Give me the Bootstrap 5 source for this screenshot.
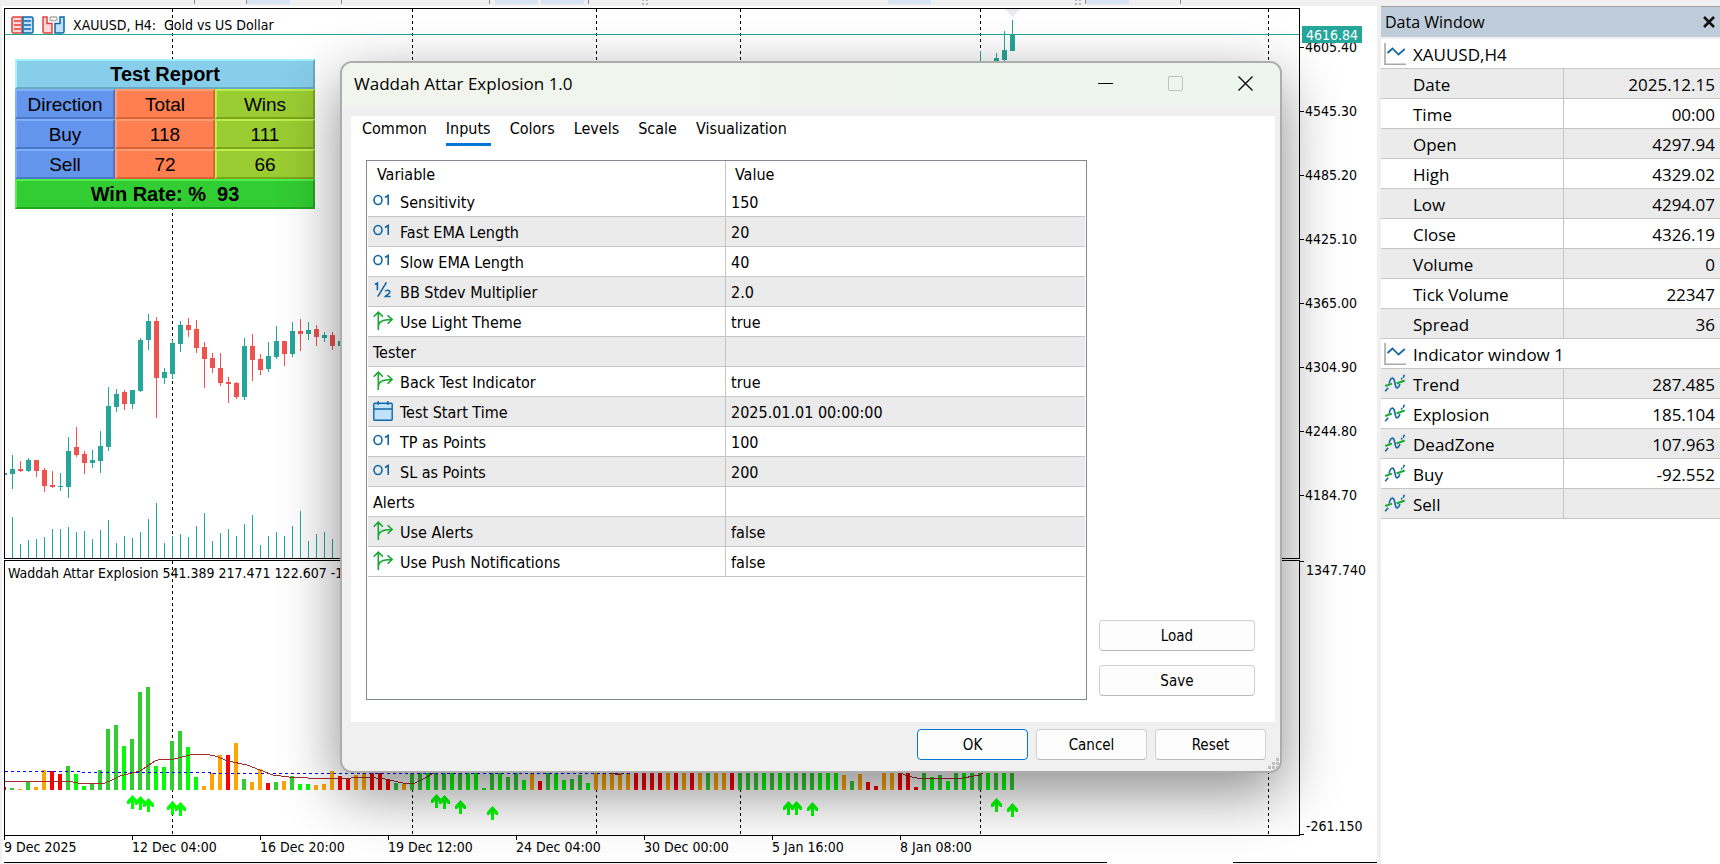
<!DOCTYPE html>
<html lang="en">
<head>
<meta charset="utf-8">
<meta name="viewport" content="width=device-width, initial-scale=1">
<title>XAUUSD, H4 - Waddah Attar Explosion</title>
<link href="https://cdn.jsdelivr.net/npm/bootstrap@5.3.0/dist/css/bootstrap.min.css" rel="stylesheet">
<style>
  :root { --ui: "Open Sans", "Noto Sans", sans-serif; --tahoma: "DejaVu Sans Condensed", "DejaVu Sans", sans-serif; --rule: #c6c6c6; --alt: #ebebeb; }
  body { background: #f0f0f0; color: #000; font-family: var(--ui); font-size: 17px; line-height: 20px; overflow: hidden; }
  .tool-strip { height: 6px; flex: none; }
  .tool-strip svg, .pane svg.plot { display: block; width: 100%; height: 100%; }

  /* chart window */
  .chart-win { background: #fff; margin: 0 4px 0 2px; padding: 2px 0 0 2px; min-width: 0; font-family: var(--tahoma); font-size: 14px; }
  .chart-grid { display: grid; grid-template-columns: minmax(0, 1fr) 77px; grid-template-rows: minmax(0, 1fr) 276px 26px; row-gap: 0; }
  .pane { position: relative; border: 1px solid #000; overflow: hidden; min-height: 0; }
  .pane-main { margin-bottom: 1px; }
  .pane-label { position: absolute; left: 6px; top: 6px; white-space: pre; }
  .pane-sub .pane-label { left: 3px; top: 2px; }
  .axis { position: relative; margin: 0; padding: 29px 0 0; list-style: none; overflow: hidden; }
  .axis li { height: 64px; display: flex; align-items: flex-start; }
  .axis li::before { content: ""; width: 4px; height: 1px; background: #000; margin: 10px 1px 0 0; }
  .axis-sub { padding: 0; display: flex; flex-direction: column; justify-content: space-between; }
  .axis.axis-sub li { height: 20px; }
  .axis-sub li::before { margin: 1px 2px 0 0; }
  .axis-sub li:last-child::before { margin-top: 18px; }
  .axis .price-tag { position: absolute; left: 2px; top: 18px; height: 17px; line-height: 18px; padding: 0 4px; background: #26a69a; color: #fff; }
  .axis .price-tag::before { display: none; }
  .time-axis { display: flex; margin: 0; padding: 0; list-style: none; overflow: hidden; }
  .time-axis li { flex: none; width: 128px; line-height: 23px; position: relative; white-space: nowrap; }
  .time-axis li::before { content: ""; position: absolute; left: 0; top: 0; width: 1px; height: 4px; background: #000; }
  .tab-strip { height: 2px; background: #f0f0f0; border-top: 1px solid #000; }
  .tab-gap { width: 126px; background: #fff; height: 2px; }

  /* report panel */
  .report { position: absolute; left: 10px; top: 50px; width: 300px; table-layout: fixed; border-collapse: separate; border-spacing: 0; font: 19px/22px "Liberation Sans", Arial, sans-serif; text-align: center; }
  .report td, .report th { height: 30px; padding: 3px 0 1px; border: 2px solid; font-weight: 400; line-height: 22px; }
  .report .rp-wide { padding: 2px 0; font-size: 20px; font-weight: 700; white-space: pre; }
  .rp-sky { background: #87ceeb; border-color: #a2f3ff #6caac4 #6caac4 #a2f3ff !important; }
  .rp-blue { background: #6495ed; border-color: #7db0ff #4a77c8 #4a77c8 #7db0ff !important; }
  .rp-coral { background: #ff7f50; border-color: #ff9d72 #dc6338 #dc6338 #ff9d72 !important; }
  .rp-olive { background: #9acd32; border-color: #b9ee4d #7ba61c #7ba61c #b9ee4d !important; }
  .rp-green { background: #32cd32; border-color: #4fee4f #1fa81f #1fa81f #4fee4f !important; }

  /* data window */
  .data-win { flex: none; width: 339px; background: #fff; }
  .data-head { height: 33px; background: #bfccd9; border-top: 1px solid #a0a0a0; border-bottom: 2px solid #f0f0f0; padding: 0 4px; font-size: 16px; }
  .data-head button, .title-bar button { border: 0; background: none; padding: 0; }
  .grid-table { width: 100%; table-layout: fixed; border-collapse: separate; border-spacing: 0; }
  .grid-table td, .grid-table th { height: 30px; padding: 2px 0 0; border-bottom: 1px solid var(--rule); font-weight: 400; text-align: left; white-space: nowrap; line-height: 20px; overflow: hidden; }
  .grid-table .c-name { border-right: 1px solid var(--rule); }
  .grid-table tr.alt > * { background: var(--alt); }
  .grid-table .ico { margin-top: -2px; vertical-align: top; }
  .data-win .col-a { width: 183px; }
  .data-win th { padding-left: 3px; }
  .data-win .plain { padding-left: 32px; }
  .data-win .ico { width: 22px; height: 22px; margin-right: 7px; }
  .data-win td { text-align: right; padding-right: 5px; }

  /* indicator properties dialog */
  .prop-dialog { position: absolute; left: 340px; right: 438px; top: 61px; min-width: 760px; background: #f0f0f0; border: 2px solid #adadad; border-radius: 12px; box-shadow: 0 20px 60px rgba(0,0,0,.45); overflow: hidden; font-family: var(--tahoma); font-size: 16px; }
  .title-bar { height: 43px; background: linear-gradient(90deg, #f2f5ec, #ecf5ee); padding-left: 12px; font-family: var(--ui); font-size: 17px; }
  .title-bar span { padding-bottom: 2px; }
  .title-bar button { width: 70px; height: 43px; padding-bottom: 2px; display: flex; align-items: center; justify-content: center; }
  .prop-body { background: #fff; margin: 10px 5px 0 9px; padding: 0 20px 22px 15px; }
  .prop-tabs { height: 44px; gap: 19px; margin-left: -4px; }
  .prop-tabs a { color: #000; text-decoration: none; height: 30px; padding-top: 3px; }
  .prop-tabs a.active { border-bottom: 3px solid #0078d4; }
  .prop-list { border: 1px solid #828790; padding: 0 1px; min-height: 540px; min-width: 0; }
  .prop-list .col-a { width: 358px; }
  .prop-list thead th { height: 26px; border-bottom: 0; padding-left: 9px; }
  .prop-list tbody th { padding-left: 5px; }
  .prop-list td { padding-left: 5px; }
  .prop-list .ico { width: 20px; height: 20px; margin-right: 7px; }
  .side-btns { width: 156px; gap: 14px; margin-left: 12px; padding-bottom: 4px; }
  .dlg-btn { height: 31px; padding: 1px 0 0; border: 1px solid #d0d0d0; border-bottom-color: #b9b9b9; border-radius: 4px; background: #fdfdfd; color: #000; font-size: 15px; line-height: 20px; }
  .dlg-btn.is-default { border-color: #0078d4; }
  .prop-foot { position: relative; height: 49px; gap: 8px; padding: 0 14px 4px; }
  .prop-foot .dlg-btn { width: 111px; }
  .grip { position: absolute; right: 1px; bottom: 1px; width: 12px; height: 12px; }
</style>
</head>
<body class="d-flex flex-column vh-100">

<svg width="0" height="0" class="position-absolute" aria-hidden="true">
  <symbol id="i-int" viewBox="0 0 20 20"><g fill="none" stroke="#1166a5" stroke-width="1.6"><ellipse cx="5" cy="9" rx="4" ry="4.500"/><path d="M12 6.500l3.200-2v9.500"/></g></symbol>
  <symbol id="i-dbl" viewBox="0 0 20 20"><g fill="none" stroke="#1166a5" stroke-width="1.6"><path d="M1.800 3.400L4.400 2v7.200M13.400 1.400L4.800 15.600M12.200 10.400c.4-1.400 4.600-1.700 4.600.6 0 1.600-2.700 2.600-4.400 4.500H17.600"/></g></symbol>
  <symbol id="i-bool" viewBox="0 0 20 20"><g fill="none" stroke="#18a832" stroke-width="1.6"><path d="M5.300 19V1.300M.7 5.700l4.600-4.600 4.600 4.600M5.300 15.500c0-4.500 4-7 13.200-7M14.600 4.200l4.400 4.300-4.400 4.300"/></g></symbol>
  <symbol id="i-date" viewBox="0 0 20 20"><rect x=".8" y="2.300" width="18.400" height="16.900" rx="1" fill="#bfe3ff" stroke="#1166a5" stroke-width="1.400"/><path d="M1 8h18M5.200 0v4M14.800 0v4" stroke="#1166a5" stroke-width="1.400"/></symbol>
  <symbol id="i-chart" viewBox="0 0 22 22"><path d="M1 0v21.200h21" fill="none" stroke="#a8a8a8" stroke-width="1.600"/><path d="M3.500 10l5-4.500 6 6 6.300-5.500" fill="none" stroke="#1166a5" stroke-width="1.700"/></symbol>
  <symbol id="i-line" viewBox="0 0 22 22"><g fill="none" stroke-width="1.600"><path d="M1.200 18.200l3-3.500M5.200 10.500c1-6.500 4.300-6.800 5.300-2.500s1.200 8 3.300 6.500 1.700-2.500 2-3.500M17.300 6.500l.8-1.700M19.300 4.800l1-3" stroke="#1166a5"/><path d="M1.200 13l6.800-2.300M12.500 10.500l8.200-3" stroke="#18a832" stroke-width="1.900"/></g></symbol>
</svg>

<div class="tool-strip" aria-hidden="true">
  <svg>
    <g fill="#d6e4f3"><path d="M247 0h43v4h-43zM495 0h43v4h-43zM541 0h43v4h-43zM888 0h43v4h-43zM1086 0h43v4h-43z"/></g>
    <g fill="#8c8c8c"><path d="M194 0h1v4h-1zM246 0h1v4h-1zM341 0h1v4h-1zM489 0h1v4h-1zM588 0h1v4h-1zM1085 0h1v4h-1zM1180 0h1v4h-1z"/><path d="M642 0h2v1h-2zM642 3h2v2h-2zM646 0h2v1h-2zM646 3h2v2h-2zM1075 0h2v1h-2zM1075 3h2v2h-2zM1079 0h2v1h-2zM1079 3h2v2h-2z" fill="#b5b5b5"/></g>
  </svg>
</div>

<div class="d-flex flex-grow-1" style="min-height:0">
  <main class="chart-win flex-grow-1 d-flex flex-column">
    <div class="chart-grid flex-grow-1">
      <section class="pane pane-main">
        <svg class="plot" id="price-plot" role="img" aria-label="Gold vs US Dollar candles"></svg>
        <div class="pane-label d-flex align-items-center">
          <svg width="23" height="18" viewBox="0 0 23 18" class="me-2"><path d="M11 1H2.500Q1 1 1 2.500v13Q1 17 2.500 17H11z" fill="#ffd9d6" stroke="#e0413c" stroke-width="1.500"/><path d="M12 1h8.500Q22 1 22 2.500v13q0 1.500-1.500 1.500H12z" fill="#bfe3ff" stroke="#1166a5" stroke-width="1.500"/><path d="M3 5h7M3 9h7M3 13h7" stroke="#e0413c" stroke-width="1.400"/><path d="M13 5h7M13 9h7M13 13h7" stroke="#1166a5" stroke-width="1.400"/></svg><svg width="23" height="18" viewBox="0 0 23 18" class="me-2"><path d="M1 1h4v6.500h5V17H2.500Q1 17 1 15.500z" fill="#ffd9d6" stroke="#e0413c" stroke-width="1.500"/><path d="M22 1h-4v6.500h-5V17h7.500q1.500 0 1.500-1.500z" fill="#bfe3ff" stroke="#1166a5" stroke-width="1.500"/><rect x="8" y="1" width="7" height="3.500" rx="1" fill="#fff" stroke="#aaa" stroke-width="1.400"/></svg><span>XAUUSD, H4:  Gold vs US Dollar</span></div>
        <table class="report">
          <thead>
            <tr><th class="rp-sky rp-wide" colspan="3">Test Report</th></tr>
            <tr><th class="rp-blue">Direction</th><th class="rp-coral">Total</th><th class="rp-olive">Wins</th></tr>
          </thead>
          <tbody>
            <tr><td class="rp-blue">Buy</td><td class="rp-coral">118</td><td class="rp-olive">111</td></tr>
            <tr><td class="rp-blue">Sell</td><td class="rp-coral">72</td><td class="rp-olive">66</td></tr>
            <tr><td class="rp-green rp-wide" colspan="3">Win Rate: %  93</td></tr>
          </tbody>
        </table>
      </section>
      <ul class="axis axis-main">
        <li>4605.40</li><li>4545.30</li><li>4485.20</li><li>4425.10</li><li>4365.00</li><li>4304.90</li><li>4244.80</li><li>4184.70</li>
        <li class="price-tag">4616.84</li>
      </ul>
      <section class="pane pane-sub">
        <svg class="plot" id="osc-plot" role="img" aria-label="Waddah Attar Explosion histogram"></svg>
        <div class="pane-label">Waddah Attar Explosion 541.389 217.471 122.607 -10</div>
      </section>
      <ul class="axis axis-sub"><li>1347.740</li><li>-261.150</li></ul>
      <ul class="time-axis">
        <li>9 Dec 2025</li><li>12 Dec 04:00</li><li>16 Dec 20:00</li><li>19 Dec 12:00</li><li>24 Dec 04:00</li><li>30 Dec 00:00</li><li>5 Jan 16:00</li><li>8 Jan 08:00</li>
      </ul>
    </div>
    <div class="d-flex"><div class="tab-strip flex-grow-1"></div><div class="tab-gap"></div><div class="tab-strip" style="width:144px"></div></div>
  </main>

  <aside class="data-win">
    <div class="data-head d-flex align-items-center justify-content-between">
      <span>Data Window</span>
      <button type="button" aria-label="Close" class="d-flex"><svg width="14" height="14" viewBox="0 0 14 14"><path d="M2 2l10 10M12 2L2 12" stroke="#111" stroke-width="2.600"/></svg></button>
    </div>
    <table class="grid-table" id="data-table"><colgroup><col class="col-a"><col></colgroup><tbody></tbody></table>
  </aside>
</div>

<div class="prop-dialog" role="dialog" aria-labelledby="dlg-title">
  <div class="title-bar d-flex align-items-center">
    <span id="dlg-title" class="flex-grow-1">Waddah Attar Explosion 1.0</span>
    <button type="button" aria-label="Minimize"><svg width="15" height="15"><path d="M0 7.500h15" stroke="#000"/></svg></button>
    <button type="button" aria-label="Maximize" disabled><svg width="15" height="15"><rect x=".5" y=".5" width="14" height="14" rx="1.500" fill="none" stroke="#bcc4bd"/></svg></button>
    <button type="button" aria-label="Close"><svg width="15" height="15"><path d="M.5.5l14 14M14.500.5l-14 14" stroke="#000" stroke-width="1.300"/></svg></button>
  </div>
  <div class="prop-body">
    <nav class="prop-tabs d-flex">
      <a href="#">Common</a><a href="#" class="active" aria-current="page">Inputs</a><a href="#">Colors</a><a href="#">Levels</a><a href="#">Scale</a><a href="#">Visualization</a>
    </nav>
    <div class="d-flex">
      <div class="prop-list flex-grow-1">
        <table class="grid-table" id="input-table">
          <colgroup><col class="col-a"><col></colgroup>
          <thead><tr><th class="c-name">Variable</th><th>Value</th></tr></thead>
          <tbody></tbody>
        </table>
      </div>
      <div class="side-btns d-flex flex-column justify-content-end flex-shrink-0">
        <button type="button" class="btn dlg-btn">Load</button>
        <button type="button" class="btn dlg-btn">Save</button>
      </div>
    </div>
  </div>
  <div class="prop-foot d-flex align-items-center justify-content-end">
    <button type="button" class="btn dlg-btn is-default">OK</button>
    <button type="button" class="btn dlg-btn">Cancel</button>
    <button type="button" class="btn dlg-btn">Reset</button>
    <svg class="grip" viewBox="0 0 12 12" fill="#bfbfbf"><path d="M9 0h3v3H9zM5 4h3v3H5zM9 4h3v3H9zM1 8h3v3H1zM5 8h3v3H5zM9 8h3v3H9z"/></svg>
  </div>
</div>

<script src="https://cdn.jsdelivr.net/npm/bootstrap@5.3.0/dist/js/bootstrap.bundle.min.js"></script>
<script>
  const icon = id => `<svg class="ico" aria-hidden="true"><use href="#i-${id}"/></svg>`;

  // Input parameters: [icon, name, value]; no icon marks a group heading
  const inputs = [
    ['int', 'Sensitivity', '150'], ['int', 'Fast EMA Length', '20'], ['int', 'Slow EMA Length', '40'],
    ['dbl', 'BB Stdev Multiplier', '2.0'], ['bool', 'Use Light Theme', 'true'], ['', 'Tester', ''],
    ['bool', 'Back Test Indicator', 'true'], ['date', 'Test Start Time', '2025.01.01 00:00:00'],
    ['int', 'TP as Points', '100'], ['int', 'SL as Points', '200'], ['', 'Alerts', ''],
    ['bool', 'Use Alerts', 'false'], ['bool', 'Use Push Notifications', 'false']];
  document.querySelector('#input-table tbody').innerHTML = inputs.map(([ic, n, v], i) =>
    `<tr class="${i % 2 ? 'alt' : ''}"><th scope="row" class="c-name">${ic ? icon(ic) : ''}${n}</th><td>${v}</td></tr>`).join('');

  // Data window rows: [icon, name, value]; null value spans both columns
  const rows = [
    ['chart', 'XAUUSD,H4', null], ['', 'Date', '2025.12.15'], ['', 'Time', '00:00'], ['', 'Open', '4297.94'],
    ['', 'High', '4329.02'], ['', 'Low', '4294.07'], ['', 'Close', '4326.19'], ['', 'Volume', '0'],
    ['', 'Tick Volume', '22347'], ['', 'Spread', '36'], ['chart', 'Indicator window 1', null],
    ['line', 'Trend', '287.485'], ['line', 'Explosion', '185.104'], ['line', 'DeadZone', '107.963'],
    ['line', 'Buy', '-92.552'], ['line', 'Sell', '']];
  document.querySelector('#data-table tbody').innerHTML = rows.map(([ic, n, v], i) => v === null
    ? `<tr><th colspan="2">${icon(ic)}${n}</th></tr>`
    : `<tr class="${i % 2 ? 'alt' : ''}"><th scope="row" class="c-name ${ic ? '' : 'plain'}">${ic ? icon(ic) : ''}${n}</th><td>${v}</td></tr>`).join('');

  // Both plots share one bar grid: 8px per bar, levels given in thirds of a pixel
  const barX = k => 7 + 8 * k;
  const rect = (x, y, w, h, f) => `<rect x="${x}" y="${y}" width="${w}" height="${h}" fill="${f}"/>`;
  const days = [167, 407, 591, 735, 975, 1263].map(x =>
    `<line x1="${x}.5" x2="${x}.5" y1="0" y2="100%" stroke="#000" stroke-dasharray="3 3"/>`).join('');
  const up = '#26a69a', down = '#ef5350';

  // Candles: direction, high, body top, body bottom, low
  const candles = `g495,537,552,597 r513,537,543,546 g504,510,543,546 r510,510,543,561 r534,540,588,606 r543,585,591,594
    g549,588,591,603 g441,483,591,624 r411,471,495,501 r483,492,519,552 g480,510,519,534 g423,468,513,549 g291,348,471,483
    g297,312,351,366 r300,306,342,360 g300,300,342,357 g144,150,303,306 g72,93,150,180 r81,93,264,384 g234,246,264,282
    g150,159,252,267 g93,105,162,186 r84,105,120,141 r90,117,174,189 r156,171,207,294 r189,204,234,249 r189,234,279,288
    r261,276,282,339 r276,279,321,327 g144,168,321,330 r132,168,210,273 r192,207,240,255 g156,198,237,246 g108,153,201,207
    r153,153,192,228 g96,123,192,201 r87,123,132,183 g96,120,132,150 r105,117,141,168 g126,135,144,156 r126,135,168,180
    g105,153,168,219`.split(/\s+/);
  const latest = { 121: 'g-717,-660,-600,-600', 123: 'g-711,-696,-600,-600', 124: 'g-777,-720,-690,-600', 125: 'g-810,-768,-717,-717' };
  const candle = (k, s) => {
    const [h, t, b, l] = s.slice(1).split(',').map(Number), f = s[0] === 'g' ? up : down, y = v => 281 + v / 3;
    return rect(barX(k), y(h), 1, (l - h) / 3, f) + rect(barX(k) - 2, y(t), 5, (b - t) / 3, f);
  };
  const volumes = [681,762,750,747,741,717,717,711,726,723,747,720,690,759,738,744,726,687,639,759,738,732,741,708,669,753,
    729,717,738,702,675,765,738,726,738,708,663,753,732,726,747,708];
  document.getElementById('price-plot').innerHTML = days + rect(0, 464, 2, 2, up)
    + '<path d="M1000 0h15l-7.500 8z" fill="#ece8f0"/>'
    + rect(0, 25, '100%', 1, up)
    + candles.map((s, k) => candle(k, s)).join('')
    + Object.entries(latest).map(([k, s]) => candle(+k, s)).join('')
    + volumes.map((v, k) => rect(barX(k), 281 + v / 3, 1, (804 - v) / 3, up)).join('');

  // Histogram bars: colour key and level
  const hue = { G: '#32cd32', g: '#00ff00', o: '#ffa500', r: '#ff0000' };
  const bars = `G684 o687 G666 o681 o630 r633 r642 G618 g642 g678 G672 G630 G507 G495 g558 G537 G396 G381 g618 g621 G543 G513
    g561 g651 o678 o639 o585 r585 o549 G657 o666 o627 r669 G666 o663 G648 g672 g672 o675 o672 o633 r648 r654 o645 o630 r636
    r639 r657 G669 o672 G600 G600 g600 G600 G600 g600 G600 g600 g600 g684 G600 g600 G651 G600 g660 o600 r663 G600 g642 g660
    G657 G645 g669 o600 o600 o600 o600 o600 r600 r600 r600 r600 o600 r600 o600 r600 o600 G600 o600 o600 r600 G600 G600 G600
    g600 G600 g600 G600 G600 G600 G600 g600 g600 g600 o645 G663 o642 r666 r678 o600 o600 r600 r600 r681 G600 g651 G645 g663
    G600 g600 G600 G600 g600 G600 g600 G600`.split(/\s+/);
  const arrows = [[132,795],[140,796],[148,798],[172,801],[180,802],[436,794],[444,795],[460,800],[492,806],[788,801],[796,801],[812,802],[996,798],[1012,803]];
  document.getElementById('osc-plot').innerHTML = days
    + rect(0, 226, 1, 3, hue.r)
    + bars.map((s, k) => rect(barX(k) - 2, s.slice(1) / 3 - 1, 4, (690 - s.slice(1)) / 3, hue[s[0]])).join('')
    + `<g transform="translate(-5 -561)"><g fill="none" shape-rendering="crispEdges">
        <path d="M5 771.500H80V772.500H210V773.500H620L640 772.500H745" stroke="#00f" stroke-dasharray="3 3"/>
        <path d="M5 781.500H70L78 783H105L112 780L120 776L140 771L155 761L160 759.500H172L190 755L208 754.500L215 756L228 761L247 765L260 770L273 775L293 777.500L323 778.500H345L358 777.500H372L385 779L405 783.500H414L425 778L437 771V765H600V771L620 775L624 770H894L896 771L907 776L920 778.500H960L980 775L986 770" stroke="#a52a2a"/>
      </g>${arrows.map(([x, y]) => `<path transform="translate(${x} ${y})" d="M.5 0L6 6v3H4L2 7v7h-3V7l-2 2h-2V6z" fill="#0f0"/>`).join('')}</g>`;
</script>
</body>
</html>
